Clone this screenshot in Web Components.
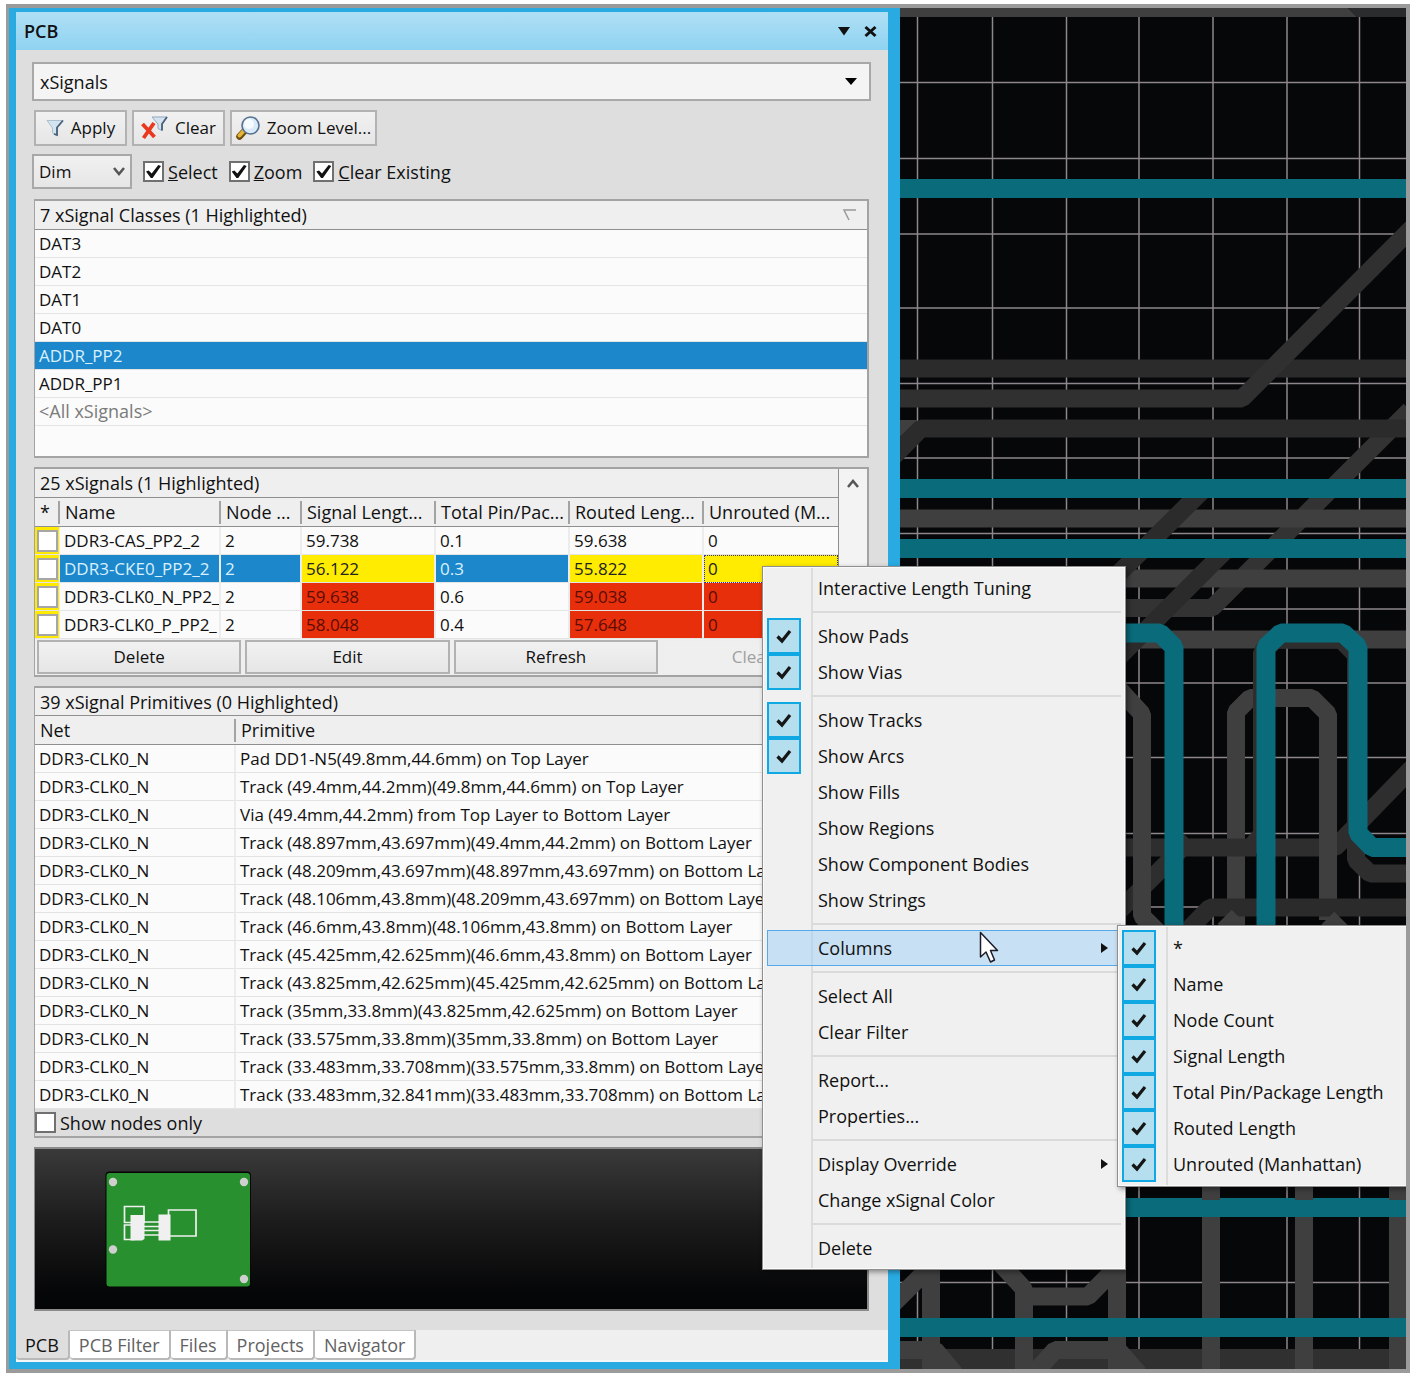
<!DOCTYPE html>
<html lang="en">
<head>
<meta charset="utf-8">
<title>PCB</title>
<style>
  body { margin: 0; background: #fff; font: 18px/22px "Open Sans", "Noto Sans", sans-serif; color: #111; }
</style>
</head>
<body>
<pcb-workspace>
  <pcb-panel slot="panel"></pcb-panel>
  <board-canvas slot="canvas"></board-canvas>
  <popup-menu slot="menu" id="context"></popup-menu>
  <popup-menu slot="submenu" id="columns"></popup-menu>
</pcb-workspace>

<script>
const base = `
  *, *::before { box-sizing: border-box; }
  button, select, input { font: inherit; color: inherit; margin: 0; }
`;

function define(name, html, setup) {
  const template = document.createElement('template');
  template.innerHTML = html;
  customElements.define(name, class extends HTMLElement {
    constructor() {
      super();
      this.attachShadow({ mode: 'open' }).append(template.content.cloneNode(true));
    }
    connectedCallback() { if (setup) setup(this, this.shadowRoot); }
  });
}

/* Outer frame: panel on the left, board on the right, menus above both */
define('pcb-workspace', `
  <style>${base}
    :host { display: block; padding: 4px 6px; }
    main { position: relative; display: grid; grid-template-columns: minmax(0, 892fr) minmax(0, 506fr);
      min-height: calc(100vh - 8px); border: 4px solid #9b9b9b; border-left-width: 3px; overflow: hidden; }
    .menu, .submenu, .cursor { position: absolute; }
    .menu { left: 753px; top: 558px; width: 364px; }
    .submenu { left: 1108px; top: 917px; width: 296px; }
    .cursor { left: 970px; top: 923px; pointer-events: none; }
  </style>
  <main>
    <slot name="panel"></slot>
    <slot name="canvas"></slot>
    <div class="menu"><slot name="menu"></slot></div>
    <div class="submenu"><slot name="submenu"></slot></div>
    <svg class="cursor" width="22" height="34" viewBox="0 0 22 34" aria-hidden="true">
      <path d="M1.500 1.500V26L7 21L11.500 31L15.500 29L11.500 19.500H18.500Z" fill="#fff" stroke="#1b1b2b" stroke-width="1.500" stroke-linejoin="round"/>
    </svg>
  </main>`);

/* Routed copper over the design grid */
define('board-canvas', `
  <style>
    :host { display: block; background: #060709; overflow: hidden; position: relative; }
    svg { position: absolute; inset: 0; width: 100%; height: 100%; display: block; }
  </style>
  <svg viewBox="900 8 506 1361" preserveAspectRatio="xMinYMin slice" fill="none" role="img" aria-label="Board routing">
    <path stroke="#8d868b" stroke-width="1.500" d="M917.500 9V1370M992.500 9V1370M1066.500 9V1370M1139 9V1370M1213 9V1187M1287 9V1370M1359.500 9V1370M900 82.500H1410M900 158.500H1410M900 234H1410M900 308H1410M900 383.500H1410M900 458H1410M900 533.500H1410M900 609H1410M900 683H1410M900 757.500H1410M900 833.500H1410M900 907H1410M900 1282.500H1410"/>
    <path fill="#3f3f3f" d="M900 8H1348L1357 17H900Z"/><path fill="#2b2c2d" d="M1348 8H1410V17H1357Z"/>
    <g stroke-width="18" stroke-linejoin="bevel">
      <path stroke="#333" d="M1410 410L1212 608H1100"/>
      <path stroke="#3f3f3f" d="M900 518.500H1410M1100 578.500H1410M1100 639.500H1410"/>
      <path fill="#3f3f3f" stroke="none" d="M900 420H918L900 437Z"/>
      <path stroke="#2b2b2b" d="M900 368.500H1410M890 460L921 428.500H1410"/>
      <path stroke="#303030" d="M900 398.500H1242L1412 228"/>
      <path stroke="#2b2b2b" d="M1205 488L1100 592M1228 548L1110 666"/>
      <path stroke="#3f3f3f" d="M1236 930V712L1250 698H1312L1328 714V920"/>
      <path stroke="#2e2e2e" d="M1100 847.500H1256M1250 848L1262 834V652L1276 639.500H1341L1356 655V860L1370 873.500H1410M1270 847.500H1335L1412 768M1190 840L1110 920"/>
      <path stroke="#3f3f3f" d="M1328 714V900"/>
      <path stroke="#2b2b2b" d="M1188 930L1210 907.500H1410"/>
      <path stroke="#3f3f3f" d="M1118 688L1142 714V916L1158 932M1328 918L1342 932M1238 916L1224 930"/>
      <path stroke="#0a6b7b" stroke-width="19" d="M900 188.500H1410M900 488.500H1410M900 548.500H1410M1100 633H1160L1174 647V940M1266 940V647L1281 633H1343L1358 647V833L1372 847.500H1410M1100 1207.500H1410"/>
      <path stroke="#303030" stroke-width="20" d="M900 1359H1410"/>
      <path stroke="#3f3f3f" d="M894 1303L931 1266V1370M1001 1264L1024 1289V1370M1024 1296.500H1088L1117 1267V1370M1211 1217V1370M1304 1217V1370M1398 1217V1370M1211 1180V1200M1304 1180V1200M1398 1180V1200M900 1350H935L955 1374M1030 1378L1055 1350H1118L1139 1374"/>
      <path stroke="#0a6b7b" stroke-width="19" d="M900 1327.500H1410"/>
    </g>
  </svg>`);

/* Push button; the icon goes in through the slot */
define('tool-button', `
  <style>${base}
    :host { display: block; font-size: 17px; }
    button { display: flex; align-items: center; justify-content: center; gap: 7px; width: 100%; height: 36px; padding: 0;
      border: 2px solid #b2b2b2; background: linear-gradient(#f1f1f1, #e6e6e6); white-space: nowrap; }
    button:disabled { color: #a0a0a0; border-color: #eee; background: #efefef; }
    :host([flush]) button { height: 34px; }
  </style>
  <button type="button"><slot></slot></button>`,
  (host, root) => { root.querySelector('button').disabled = host.hasAttribute('off'); });

/* Tick box with its label */
define('check-option', `
  <style>${base}
    :host { display: block; }
    label { display: flex; align-items: center; gap: 4px; white-space: nowrap; }
    input { appearance: none; display: grid; place-items: center; width: 21px; height: 21px; border: 2px solid #707070; background: #fff; flex: none; }
    input:checked::before { content: ""; width: 15px; height: 13px; background: #111;
      clip-path: polygon(0 50%, 18% 42%, 38% 66%, 82% 0, 100% 8%, 44% 100%, 32% 100%); }
  </style>
  <label><input type="checkbox"><span><slot></slot></span></label>`,
  (host, root) => { root.querySelector('input').checked = host.hasAttribute('checked'); });

/* Drop-down with either a solid triangle or a chevron */
define('drop-down', `
  <style>${base}
    :host { display: grid; align-items: center; }
    select, svg { grid-area: 1 / 1; }
    select { appearance: none; width: 100%; height: 39px; padding: 0 6px; border: 2px solid #a8a8a8; border-radius: 0; background: #f4f4f4; }
    :host([small]) select { height: 35px; padding: 0 5px; font-size: 17px; background: linear-gradient(#f1f1f1, #e6e6e6); }
    svg { justify-self: end; margin-right: 13px; pointer-events: none; }
    :host([small]) svg { margin-right: 6px; }
    :host([small]) .solid, :host(:not([small])) .chevron { display: none; }
  </style>
  <select><option></option></select>
  <svg class="solid" width="14" height="8" viewBox="0 0 14 8" aria-hidden="true"><path d="M1 0H13L7 7Z" fill="#000"/></svg>
  <svg class="chevron" width="14" height="11" viewBox="0 0 14 11" aria-hidden="true"><path d="M2 2L7 8L12 2" fill="none" stroke="#555" stroke-width="2.500"/></svg>`,
  (host, root) => {
    root.querySelector('option').textContent = host.getAttribute('value');
    root.querySelector('select').setAttribute('aria-label', host.getAttribute('label'));
  });

const grid = `
  :host { display: block; border: 2px solid #a3a3a3; border-left-width: 1px; }
  table { width: 100%; border-collapse: separate; border-spacing: 0; table-layout: fixed; }
  th, td { padding: 0 4px; text-align: left; font-weight: 400; white-space: nowrap; overflow: hidden; }
  td { height: 28px; font-size: 17px; border-bottom: 1px solid #e4e4e4; border-right: 2px solid #ececec; background: #fbfbfb; }
  th { height: 29px; padding: 0 5px; border-bottom: 1px solid #8f8f8f;
    background: linear-gradient(#a3a3a3, #a3a3a3) right center / 2px 23px no-repeat #efefef; }
  th:last-child { background: #efefef; }
  td:last-child { border-right: 0; }
  h2 { margin: 0; height: 29px; padding: 0 5px; font: inherit; background: #efefef; border-bottom: 1px solid #8f8f8f; display: flex; align-items: center; justify-content: space-between; }
`;

define('class-list', `
  <style>${base}${grid}
    :host { background: #fbfbfb; padding-bottom: 30px; }
    h2 { padding-right: 9px; }
    ul { list-style: none; margin: 0; padding: 0; font-size: 17px; }
    li { height: 28px; padding: 0 4px; line-height: 27px; border-bottom: 1px solid #e4e4e4; }
    .on { background: #1c87cb; color: #d9f0ff; }
    .all { color: #7a7a7a; font-size: 18px; }
  </style>
  <h2>7 xSignal Classes (1 Highlighted)
    <svg width="16" height="14" viewBox="0 0 16 14" aria-hidden="true"><path d="M14 2H2L7 12" fill="none" stroke="#999" stroke-width="1.500"/></svg>
  </h2>
  <ul><li>DAT3</li><li>DAT2</li><li>DAT1</li><li>DAT0</li><li class="on">ADDR_PP2</li><li>ADDR_PP1</li><li class="all">&lt;All xSignals&gt;</li></ul>`);

define('signal-table', `
  <style>${base}${grid}
    :host { background: #efefef; }
    .body { display: grid; grid-template-columns: minmax(0, 1fr) 28px; }
    .list { border-right: 1px solid #8f8f8f; }
    .scroll { background: #f3f3f3; display: flex; justify-content: center; align-items: start; padding-top: 9px; }
    .pick { width: 25px; } .name { width: 161px; } .node { width: 81px; } .len { width: 134px; }
    td:first-child { background: #ffea00; padding: 0 2px; border-right-width: 1px; }
    input { appearance: none; display: block; width: 21px; height: 22px; border: 2px solid #a6a6a6; background: #fff; }
    .sel td:not(:first-child) { background: #1c87cb; color: #d9f0ff; }
    .sel td.warn:not(:first-child) { background: #ffec00; color: #222; }
    td.bad { background: #e72f0b; color: #5a0d05; }
    .sel td.focus { outline: 1px dotted #35338f; outline-offset: -1px; }
    .row { display: grid; grid-template-columns: repeat(4, minmax(0, 1fr)); gap: 4px; padding: 1px 1px 1px 2px; }
  </style>
  <div class="body">
    <div class="list">
      <h2>25 xSignals (1 Highlighted)</h2>
      <table>
        <colgroup><col class="pick"><col class="name"><col class="node"><col class="len"><col class="len"><col class="len"><col></colgroup>
        <thead><tr><th>*</th><th>Name</th><th>Node ...</th><th>Signal Lengt...</th><th>Total Pin/Pac...</th><th>Routed Leng...</th><th>Unrouted (M...</th></tr></thead>
        <tbody></tbody>
      </table>
    </div>
    <div class="scroll"><svg width="14" height="12" viewBox="0 0 14 12" aria-hidden="true"><path d="M2 9L7 3L12 9" fill="none" stroke="#555" stroke-width="2.500"/></svg></div>
  </div>
  <div class="row">
    <tool-button flush>Delete</tool-button><tool-button flush>Edit</tool-button><tool-button flush>Refresh</tool-button><tool-button flush off>Clear All</tool-button>
  </div>`,
  (host, root) => {
    const rows = [
      ['DDR3-CAS_PP2_2', '2', '59.738', '0.1', '59.638', '0', ''],
      ['DDR3-CKE0_PP2_2', '2', '56.122', '0.3', '55.822', '0', 'warn'],
      ['DDR3-CLK0_N_PP2_', '2', '59.638', '0.6', '59.038', '0', 'bad'],
      ['DDR3-CLK0_P_PP2_', '2', '58.048', '0.4', '57.648', '0', 'bad'],
    ];
    root.querySelector('tbody').innerHTML = rows.map(([n, c, s, p, r, u, k]) => `
      <tr class="${k === 'warn' ? 'sel' : ''}"><td><input type="checkbox" aria-label="${n}"></td><td>${n}</td><td>${c}</td>
      <td class="${k}">${s}</td><td>${p}</td><td class="${k}">${r}</td><td class="${k}${k === 'warn' ? ' focus' : ''}">${u}</td></tr>`).join('');
  });

define('primitive-table', `
  <style>${base}${grid}
    :host { background: #dedede; }
    h2 { height: 28px; }
    .net { width: 201px; }
    .foot { height: 27px; display: flex; align-items: center; }
  </style>
  <h2>39 xSignal Primitives (0 Highlighted)</h2>
  <table>
    <colgroup><col class="net"><col></colgroup>
    <thead><tr><th>Net</th><th>Primitive</th></tr></thead>
    <tbody></tbody>
  </table>
  <div class="foot"><check-option>Show nodes only</check-option></div>`,
  (host, root) => {
    const rows = [
      'Pad DD1-N5(49.8mm,44.6mm) on Top Layer',
      'Track (49.4mm,44.2mm)(49.8mm,44.6mm) on Top Layer',
      'Via (49.4mm,44.2mm) from Top Layer to Bottom Layer',
      'Track (48.897mm,43.697mm)(49.4mm,44.2mm) on Bottom Layer',
      'Track (48.209mm,43.697mm)(48.897mm,43.697mm) on Bottom Layer',
      'Track (48.106mm,43.8mm)(48.209mm,43.697mm) on Bottom Layer',
      'Track (46.6mm,43.8mm)(48.106mm,43.8mm) on Bottom Layer',
      'Track (45.425mm,42.625mm)(46.6mm,43.8mm) on Bottom Layer',
      'Track (43.825mm,42.625mm)(45.425mm,42.625mm) on Bottom Layer',
      'Track (35mm,33.8mm)(43.825mm,42.625mm) on Bottom Layer',
      'Track (33.575mm,33.8mm)(35mm,33.8mm) on Bottom Layer',
      'Track (33.483mm,33.708mm)(33.575mm,33.8mm) on Bottom Layer',
      'Track (33.483mm,32.841mm)(33.483mm,33.708mm) on Bottom Layer',
    ];
    root.querySelector('tbody').innerHTML = rows.map(r => `<tr><td>DDR3-CLK0_N</td><td>${r}</td></tr>`).join('');
  });

define('board-preview', `
  <style>
    :host { display: block; box-sizing: border-box; height: 164px; border: 2px solid #8b8b8b; border-left-width: 1px; background: linear-gradient(#3a3a3a, #1c1c1c 45%, #050607 90%); }
    svg { display: block; margin: 22px 0 0 69px; }
  </style>
  <svg width="148" height="118" viewBox="104 1171 148 118" role="img" aria-label="Board overview">
    <rect x="105.500" y="1171.500" width="145.500" height="116" rx="4" fill="#050505"/>
    <rect x="106.500" y="1173" width="143.500" height="113.500" rx="3" fill="#28902e"/>
    <g fill="#cfcfcf"><circle cx="113" cy="1182" r="4.200"/><circle cx="244" cy="1182" r="4.200"/><circle cx="113" cy="1249.500" r="4.200"/><circle cx="244" cy="1279" r="4.200"/></g>
    <g fill="none" stroke="#f0f0f0" stroke-width="1.700"><path d="M124.500 1206.500H144V1222.500H124.500ZM124.500 1225H134V1239.500H124.500ZM168.500 1210H196V1236H168.500ZM144 1222H159M144 1226.500H159M144 1230.500H159M144 1235H159"/></g>
    <path fill="#f0f0f0" d="M130.500 1215H144.500V1239L142 1240.500H130.500ZM158.500 1214.500H170.500V1240.500H158.500Z"/>
  </svg>`);

define('panel-tabs', `
  <style>${base}
    :host { display: block; background: #efefef; }
    nav { display: flex; height: 32px; align-items: start; border-bottom: 2px solid #f6f6f6; }
    button { height: 30px; padding: 0 9px; border: 0; border-top: 1px solid #c4c4c4; border-right: 2px solid #b9b9b9; border-bottom: 2px solid #b9b9b9;
      border-radius: 0 0 4px 4px; background: #fff; color: #626262; white-space: nowrap; }
    button[aria-selected=true] { background: #dedede; color: #111; border-top-color: #dedede; }
  </style>
  <nav role="tablist">
    <button role="tab" aria-selected="true">PCB</button><button role="tab">PCB Filter</button><button role="tab">Files</button><button role="tab">Projects</button><button role="tab">Navigator</button>
  </nav>`);

define('pcb-panel', `
  <style>${base}
    :host { display: flex; flex-direction: column; background: #dedede; border: solid #29abe2; border-width: 4px 12px 7px 7px; min-width: 0; }
    header { display: flex; align-items: center; gap: 14px; height: 38px; padding: 0 11px 0 8px; background: linear-gradient(#b0dff5, #8fd3f1); }
    h1 { margin: 0; font: inherit; font-weight: 600; flex: 1; }
    header button { border: 0; padding: 0; background: none; display: flex; }
    .content { flex: 1; padding: 12px 17px 0 16px; display: flex; flex-direction: column; }
    .tools { display: flex; gap: 5px; padding: 9px 2px 8px; }
    .apply, .clear { width: 93px; } .zoom { width: 147px; }
    .options { display: flex; align-items: center; gap: 11px; padding-bottom: 10px; }
    .dim { width: 100px; }
    .lists { display: flex; flex-direction: column; gap: 9px; padding: 0 2px; }
    svg { flex: none; }
  </style>
  <header>
    <h1>PCB</h1>
    <button type="button" aria-label="Panel menu"><svg width="12" height="9" viewBox="0 0 12 9"><path d="M0 0H12L6 8.500Z" fill="#111"/></svg></button>
    <button type="button" aria-label="Close"><svg width="13" height="13" viewBox="0 0 13 13"><path d="M1.500 2L11.500 11M11.500 2L1.500 11" stroke="#111" stroke-width="3"/></svg></button>
  </header>
  <div class="content">
    <drop-down value="xSignals" label="Object type"></drop-down>
    <div class="tools">
      <tool-button class="apply">
        <svg width="18" height="18" viewBox="0 0 18 18" aria-hidden="true"><path d="M1 1.500H17L11 9V16L6.500 14V9Z" fill="#d5e3ee" stroke="#aac0d2"/><path d="M17 1.500L11 8.500V16L8 15" fill="none" stroke="#48607a" stroke-width="1.800"/></svg>
        Apply</tool-button>
      <tool-button class="clear">
        <svg width="27" height="25" viewBox="0 0 27 25" aria-hidden="true"><path d="M11 1H26L21 8V14.500L17 12.500V8Z" fill="#d5e3ee" stroke="#8fa9c0"/><path d="M26 1L21 8V14.500" fill="none" stroke="#48607a" stroke-width="1.800"/><path d="M1.500 8L13.500 21M13 7L2.500 22" stroke="#e8391f" stroke-width="3.800"/></svg>
        Clear</tool-button>
      <tool-button class="zoom">
        <svg width="24" height="24" viewBox="0 0 24 24" aria-hidden="true"><path d="M3.500 20.500L9 14.500" stroke="#6b4c08" stroke-width="6.500" stroke-linecap="round"/><path d="M3.500 19.500L8.500 14" stroke="#e5b53a" stroke-width="4" stroke-linecap="round"/><circle cx="14.500" cy="9.500" r="8.500" fill="#d9eafa" stroke="#56718f" stroke-width="1.600"/><circle cx="13" cy="8" r="5" fill="#f6fbff"/></svg>
        Zoom Level...</tool-button>
    </div>
    <div class="options">
      <drop-down small class="dim" value="Dim" label="Masking"></drop-down>
      <check-option checked><u>S</u>elect</check-option>
      <check-option checked><u>Z</u>oom</check-option>
      <check-option checked><u>C</u>lear Existing</check-option>
    </div>
    <div class="lists">
      <class-list></class-list>
      <signal-table></signal-table>
      <primitive-table></primitive-table>
      <board-preview></board-preview>
    </div>
  </div>
  <panel-tabs></panel-tabs>`);

const menus = {
  context: ['Interactive Length Tuning', '-', '+Show Pads', '+Show Vias', '-', '+Show Tracks', '+Show Arcs', 'Show Fills', 'Show Regions',
    'Show Component Bodies', 'Show Strings', '-', '>Columns', '-', 'Select All', 'Clear Filter', '-', 'Report...', 'Properties...', '-',
    '>Display Override', 'Change xSignal Color', '-', 'Delete'],
  columns: ['+*', '+Name', '+Node Count', '+Signal Length', '+Total Pin/Package Length', '+Routed Length', '+Unrouted (Manhattan)'],
};

define('popup-menu', `
  <style>${base}
    :host { display: block; box-sizing: border-box; padding: 3px 4px; border: 1px solid #8f8f8f; box-shadow: inset 0 0 0 1px #fafafa, 2px 2px 5px #0006;
      background: linear-gradient(90deg, transparent 48px, #dcdcdc 48px 50px, transparent 50px), #f0f0f0; }
    :host(#columns) { padding: 4px; }
    button { display: grid; grid-template-columns: 34px 1fr 20px; column-gap: 17px; align-items: center; width: 100%; height: 36px; padding: 0; border: 0; background: none; text-align: left; white-space: nowrap; }
    .tick { display: grid; place-items: center; height: 36px; }
    .checked .tick { border: 2px solid #0fa8e3; background: #b5dfee; }
    .current { background: #9fd0f580; box-shadow: inset 0 0 0 1px #56aae8; }
    hr { margin: 5px 0 5px 45px; border: 0; border-top: 2px solid #dadada; }
  </style>
  <div role="menu"></div>`,
  (host, root) => {
    root.querySelector('div').innerHTML = menus[host.id].map(entry => {
      if (entry === '-') return '<hr>';
      const checked = entry[0] === '+', sub = entry[0] === '>';
      const text = checked || sub ? entry.slice(1) : entry;
      return `<button type="button" role="${checked ? 'menuitemcheckbox' : 'menuitem'}" class="${checked ? 'checked' : ''} ${text === 'Columns' ? 'current' : ''}">
        <span class="tick">${checked ? '<svg width="16" height="15" viewBox="0 0 16 15"><path d="M1.500 7.500L6 12L14 2" fill="none" stroke="#151515" stroke-width="3.200"/></svg>' : ''}</span>
        <span>${text}</span>${sub ? '<svg width="8" height="12" viewBox="0 0 8 12"><path d="M0 1L7 6L0 11Z" fill="#111"/></svg>' : ''}</button>`;
    }).join('');
  });
</script>
</body>
</html>
